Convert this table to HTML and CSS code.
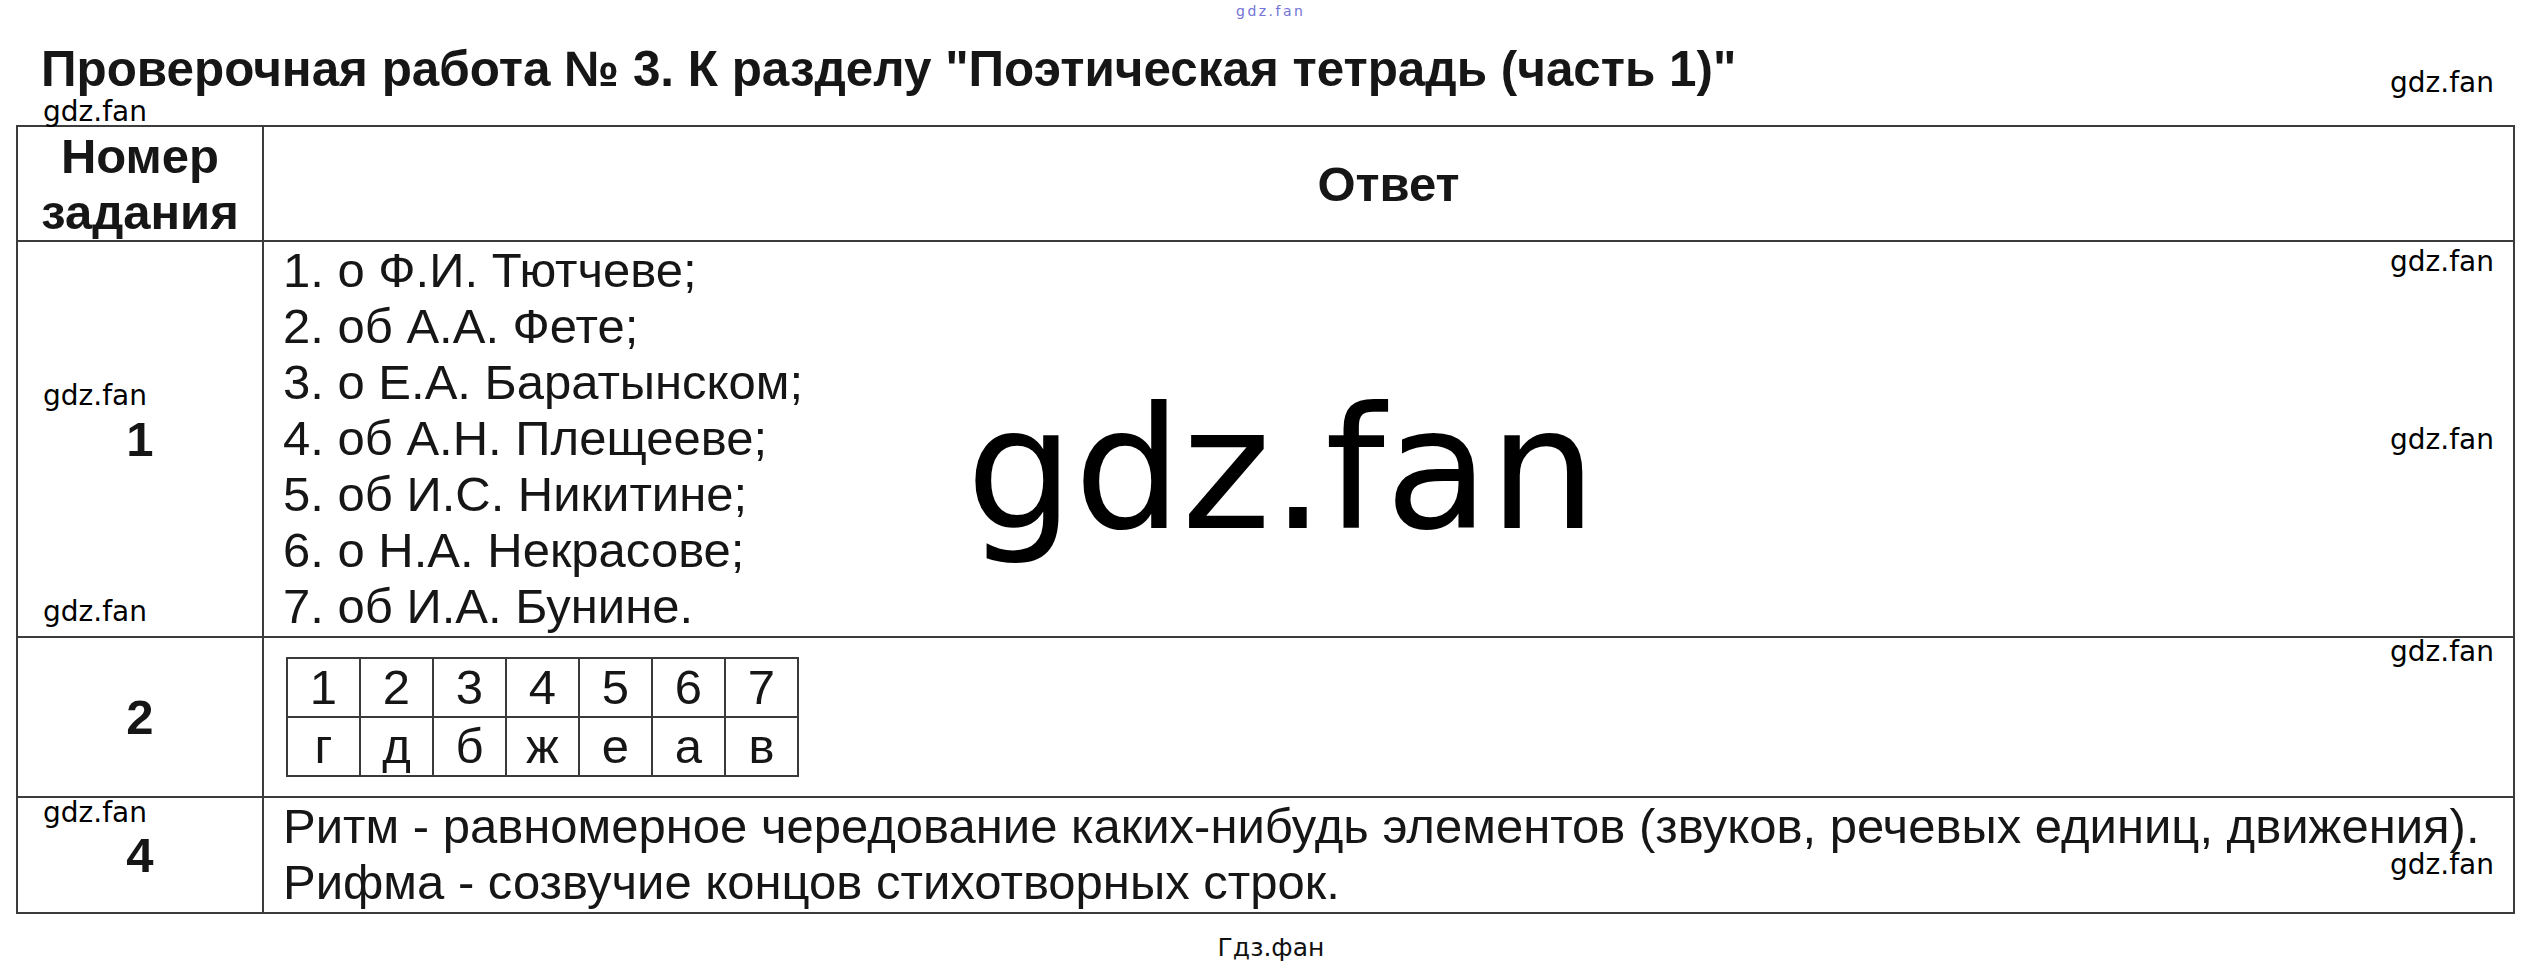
FILE: index.html
```html
<!DOCTYPE html>
<html lang="ru">
<head>
<meta charset="utf-8">
<title>Проверочная работа № 3</title>
<link rel="stylesheet" href="styles.css">
</head>
<body>
<div class="page">
  <div class="wm wm-top">gdz.fan</div>
  <h1 class="title">Проверочная работа № 3. К разделу "Поэтическая тетрадь (часть 1)"</h1>
  <table class="answers">
    <tr class="row-head">
      <th class="col-num">Номер<br>задания</th>
      <th class="col-ans">Ответ</th>
    </tr>
    <tr class="row-1">
      <td class="num">1</td>
      <td class="ans list">
        <div>1. о Ф.И. Тютчеве;</div>
        <div>2. об А.А. Фете;</div>
        <div>3. о Е.А. Баратынском;</div>
        <div>4. об А.Н. Плещееве;</div>
        <div>5. об И.С. Никитине;</div>
        <div>6. о Н.А. Некрасове;</div>
        <div>7. об И.А. Бунине.</div>
      </td>
    </tr>
    <tr class="row-2">
      <td class="num">2</td>
      <td class="ans">
        <table class="match">
          <tr><td>1</td><td>2</td><td>3</td><td>4</td><td>5</td><td>6</td><td>7</td></tr>
          <tr><td>г</td><td>д</td><td>б</td><td>ж</td><td>е</td><td>а</td><td>в</td></tr>
        </table>
      </td>
    </tr>
    <tr class="row-4">
      <td class="num">4</td>
      <td class="ans list">
        <div>Ритм - равномерное чередование каких-нибудь элементов (звуков, речевых единиц, движения).</div>
        <div>Рифма - созвучие концов стихотворных строк.</div>
      </td>
    </tr>
  </table>
  <div class="footer">Гдз.фан</div>

  <div class="wm wm-big">gdz.fan</div>
  <div class="wm wm-l1">gdz.fan</div>
  <div class="wm wm-l2">gdz.fan</div>
  <div class="wm wm-l3">gdz.fan</div>
  <div class="wm wm-l4">gdz.fan</div>
  <div class="wm wm-r1">gdz.fan</div>
  <div class="wm wm-r2">gdz.fan</div>
  <div class="wm wm-r3">gdz.fan</div>
  <div class="wm wm-r4">gdz.fan</div>
  <div class="wm wm-r5">gdz.fan</div>
</div>
</body>
</html>
```
FILE: styles.css
```css
html, body {
  margin: 0;
  padding: 0;
  background: #ffffff;
}

.page {
  position: relative;
  width: 2542px;
  height: 964px;
  padding-top: 41px;
  box-sizing: border-box;
  font-family: "Liberation Sans", Arial, sans-serif;
  color: #161616;
}

.title {
  margin: 0 0 28px 41px;
  font-size: 49.4px;
  line-height: 56px;
  font-weight: bold;
  color: #161616;
  white-space: nowrap;
}

.answers {
  margin-left: 16px;
  width: 2499px;
  border-collapse: collapse;
}

.answers > tbody > tr > th,
.answers > tbody > tr > td {
  border: 2px solid #3c3c3c;
  padding: 0;
}

.col-num {
  width: 244px;
}

.row-head th {
  height: 113px;
  font-size: 49px;
  line-height: 56px;
  font-weight: bold;
  color: #161616;
  text-align: center;
  vertical-align: middle;
}

.num {
  text-align: center;
  vertical-align: middle;
  font-weight: bold;
  font-size: 49px;
  color: #161616;
}

.answers > tbody > tr > td.ans {
  padding-left: 19px;
  font-size: 49px;
  line-height: 56px;
  vertical-align: top;
  white-space: nowrap;
}

.row-1 td {
  height: 394px;
}

.row-2 td {
  height: 158px;
}

.answers > tbody > tr.row-2 > td.ans {
  vertical-align: middle;
}

.row-4 td {
  height: 114px;
}

.match {
  margin-left: 3px;
  border-collapse: collapse;
}

.match td {
  width: 71px;
  height: 57px;
  border: 2px solid #3a3a3a;
  padding: 0;
  text-align: center;
  vertical-align: middle;
  font-size: 49px;
  line-height: 57px;
}

.footer {
  margin-top: 21px;
  text-align: center;
  font-family: "DejaVu Sans", sans-serif;
  font-size: 25px;
  line-height: 1;
  color: #111;
}

.wm {
  position: absolute;
  font-family: "DejaVu Sans", sans-serif;
  font-size: 28px;
  line-height: 1;
  color: #000;
  white-space: nowrap;
}

.wm-top {
  left: 1236px;
  top: 4px;
  font-size: 14px;
  letter-spacing: 2.5px;
  color: #7272d8;
}

.wm-big {
  left: 966px;
  top: 384px;
  font-size: 170px;
}

.wm-l1 { left: 43px; top: 98px; }
.wm-l2 { left: 43px; top: 382px; }
.wm-l3 { left: 43px; top: 598px; }
.wm-l4 { left: 43px; top: 799px; }

.wm-r1 { left: 2390px; top: 69px; }
.wm-r2 { left: 2390px; top: 248px; }
.wm-r3 { left: 2390px; top: 426px; }
.wm-r4 { left: 2390px; top: 638px; }
.wm-r5 { left: 2390px; top: 851px; }
```
